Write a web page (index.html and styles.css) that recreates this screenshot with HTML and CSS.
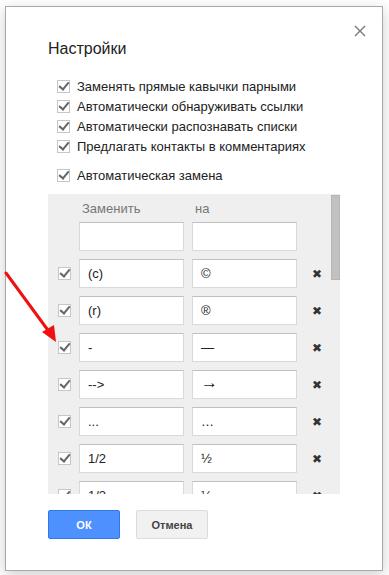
FILE: index.html
```html
<!DOCTYPE html>
<html lang="ru">
<head>
    <meta charset="UTF-8">
    <meta name="viewport" content="width=device-width, initial-scale=1.0">
    <title>Настройки</title>
    <link rel="stylesheet" href="styles.css">
</head>
<body>
    <div class="page">
        <div class="dialog">
            <button class="close" title="Закрыть">
                <svg width="12" height="12" viewBox="0 0 12 12"><path d="M1 1L11 11M11 1L1 11" stroke="#777" stroke-width="1.4"/></svg>
            </button>

            <h1 class="title">Настройки</h1>

            <div class="options">
                <label class="option"><span class="check"></span>Заменять прямые кавычки парными</label>
                <label class="option"><span class="check"></span>Автоматически обнаруживать ссылки</label>
                <label class="option"><span class="check"></span>Автоматически распознавать списки</label>
                <label class="option"><span class="check"></span>Предлагать контакты в комментариях</label>
            </div>

            <label class="option option-main"><span class="check"></span>Автоматическая замена</label>

            <div class="panel">
                <div class="panel-body">
                    <div class="grid">
                        <span></span>
                        <span class="head">Заменить</span>
                        <span class="head">на</span>
                        <span></span>

                        <span></span>
                        <div class="field"></div>
                        <div class="field"></div>
                        <span></span>

                        <span class="check"></span>
                        <div class="field">(c)</div>
                        <div class="field">©</div>
                        <span class="remove">✖</span>

                        <span class="check"></span>
                        <div class="field">(r)</div>
                        <div class="field">®</div>
                        <span class="remove">✖</span>

                        <span class="check"></span>
                        <div class="field">-</div>
                        <div class="field">—</div>
                        <span class="remove">✖</span>

                        <span class="check"></span>
                        <div class="field">--&gt;</div>
                        <div class="field big">→</div>
                        <span class="remove">✖</span>

                        <span class="check"></span>
                        <div class="field">...</div>
                        <div class="field">…</div>
                        <span class="remove">✖</span>

                        <span class="check"></span>
                        <div class="field">1/2</div>
                        <div class="field">½</div>
                        <span class="remove">✖</span>

                        <span class="check"></span>
                        <div class="field">1/3</div>
                        <div class="field">⅓</div>
                        <span class="remove">✖</span>
                    </div>
                </div>
                <div class="scrollbar"><div class="thumb"></div></div>
            </div>

            <div class="buttons">
                <button class="btn btn-ok">ОК</button>
                <button class="btn btn-cancel">Отмена</button>
            </div>
        </div>

        <svg class="arrow" width="60" height="80" viewBox="0 0 60 80">
            <path d="M2 2L46 62" stroke="#f01010" stroke-width="3" stroke-linecap="round"/>
            <path d="M52 71L38 61L50 54Z" fill="#f01010"/>
        </svg>
    </div>
</body>
</html>
```

FILE: styles.css
```css
body {
    margin: 0;
    background: #fff;
    font-family: Arial, "Liberation Sans", sans-serif;
    color: #222;
}
.page {
    position: relative;
    padding: 6px 6px 5px 5px;
}
.dialog {
    position: relative;
    width: 334px;
    height: 563px;
    border: 1px solid #a8a8a8;
    box-shadow: 0 4px 14px rgba(0, 0, 0, 0.2);
    background: #fff;
    padding: 0 0 0 42px;
}
.close {
    position: absolute;
    top: 18px;
    right: 16px;
    border: none;
    background: none;
    padding: 0;
    width: 12px;
    height: 12px;
    cursor: pointer;
}
.close svg {
    display: block;
}
.title {
    margin: 0;
    padding-top: 32px;
    font-size: 16px;
    font-weight: normal;
    line-height: 20px;
    color: #222;
}
.options {
    margin-top: 17px;
    display: flex;
    flex-direction: column;
}
.option {
    display: flex;
    align-items: center;
    height: 20px;
    padding-left: 9px;
    font-size: 13px;
    color: #222;
}
.option .check {
    margin-right: 7px;
}
.option-main {
    margin-top: 9px;
}
.check {
    display: inline-block;
    width: 11px;
    height: 11px;
    border: 1px solid #c6c6c6;
    background: #fff;
    position: relative;
    flex: none;
}
.check::after {
    content: "";
    position: absolute;
    left: 3px;
    top: -1px;
    width: 4px;
    height: 8px;
    border-right: 2px solid #666;
    border-bottom: 2px solid #666;
    transform: rotate(40deg);
}
.panel {
    margin-top: 9px;
    width: 292px;
    height: 300px;
    background: #efefef;
    display: flex;
    overflow: hidden;
}
.panel-body {
    flex: 1;
    overflow: hidden;
    padding: 0 0 0 10px;
}
.grid {
    display: grid;
    grid-template-columns: 13px 105px 105px 20px;
    column-gap: 8px;
    row-gap: 8px;
    align-items: center;
    padding-top: 5px;
}
.grid .head {
    font-size: 13px;
    color: #777;
    padding-left: 3px;
    line-height: 20px;
    margin-bottom: -5px;
}
.field {
    height: 27px;
    line-height: 27px;
    border: 1px solid #d9d9d9;
    border-top-color: #c0c0c0;
    background: #fff;
    padding-left: 8px;
    font-size: 13px;
    color: #222;
}
.field.big {
    font-size: 17px;
    line-height: 24px;
    height: 27px;
}
.remove {
    font-size: 12px;
    color: #333;
    text-align: center;
    padding-left: 4px;
    font-family: "DejaVu Sans", sans-serif;
}
.scrollbar {
    width: 9px;
    padding-top: 1px;
    background: #efefef;
}
.thumb {
    height: 85px;
    background: #c1c1c1;
    border: 1px solid #b5b5b5;
    box-sizing: border-box;
}
.buttons {
    display: flex;
    gap: 16px;
    margin-top: 16px;
}
.btn {
    width: 72px;
    height: 29px;
    border-radius: 2px;
    font-family: Arial, "Liberation Sans", sans-serif;
    font-size: 11px;
    font-weight: bold;
    cursor: pointer;
}
.btn-ok {
    background: #4d90fe;
    border: 1px solid #3079ed;
    color: #fff;
}
.btn-cancel {
    background: #f1f1f1;
    border: 1px solid #dcdcdc;
    color: #444;
}
.arrow {
    position: absolute;
    left: 4px;
    top: 271px;
}
```
